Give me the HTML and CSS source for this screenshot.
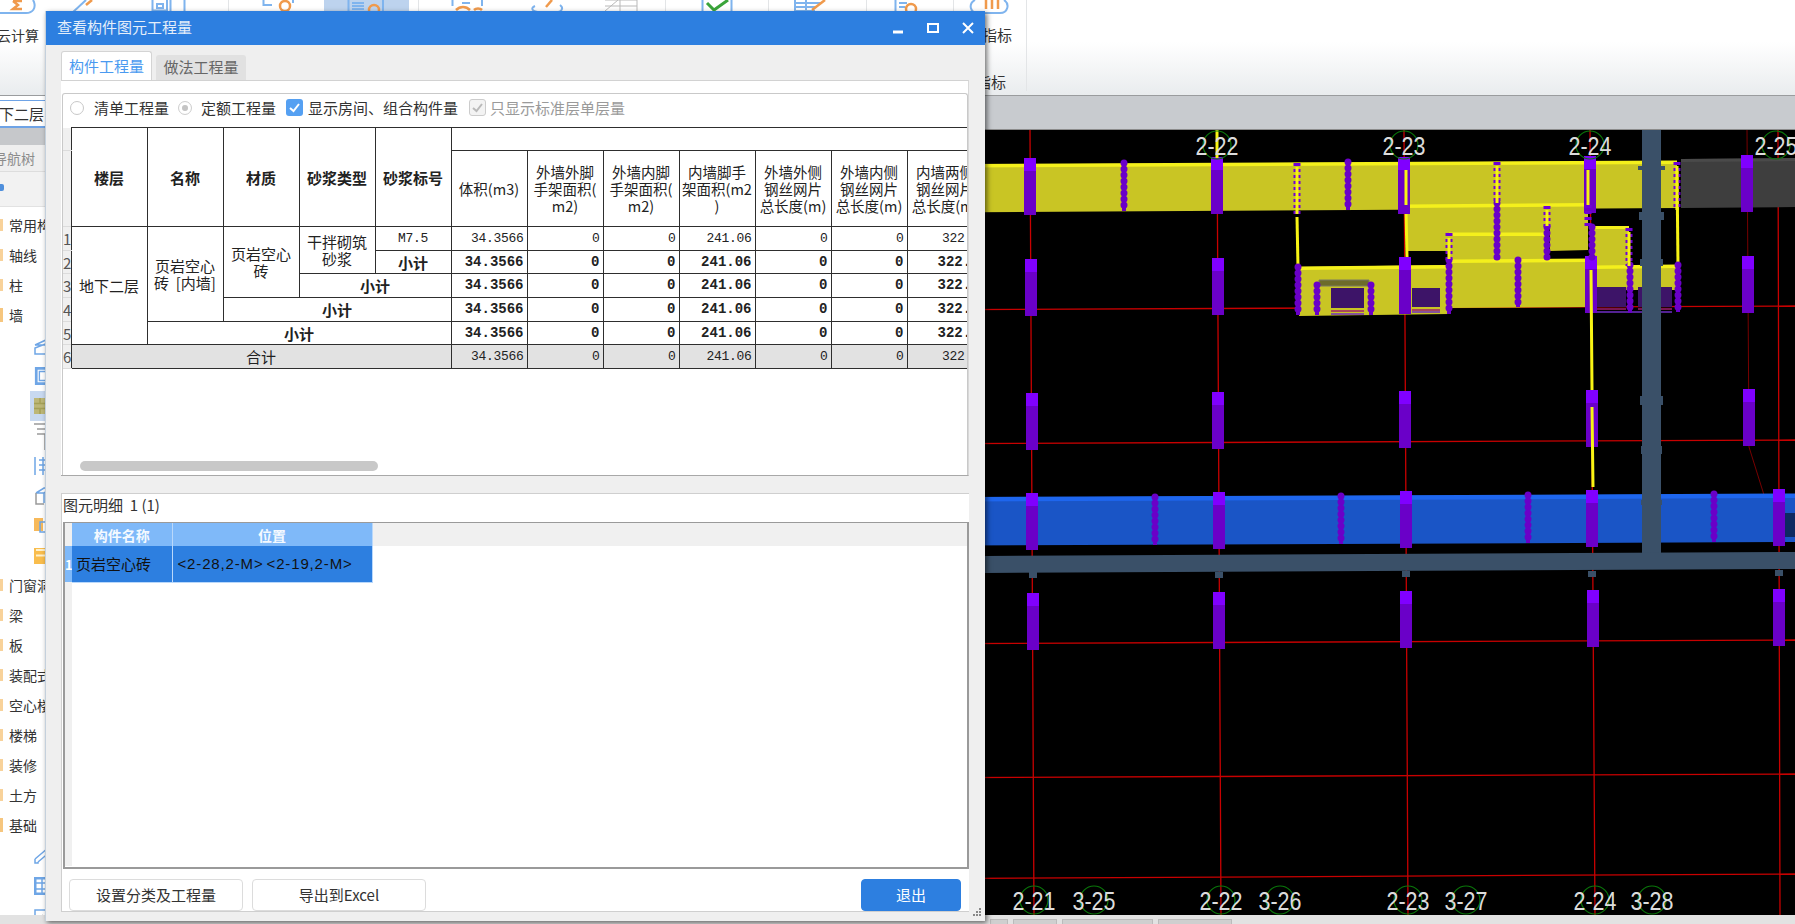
FILE: index.html
```html
<!DOCTYPE html>
<html lang="zh-CN">
<head>
<meta charset="utf-8">
<title>查看构件图元工程量</title>
<link rel="stylesheet" href="styles.css">
</head>
<body>
<div class="app">
  <header class="ribbon">
    <svg class="ribbon-art" width="1795" height="95" viewBox="0 0 1795 95">
      <rect class="hl" x="324" y="0" width="85" height="11"/>
      <g class="sep">
        <path d="M228.500 0V91M418.500 0V91M665.500 0V91M768.500 0V91M866.500 0V91M953.500 0V91M1026.500 0V91"/>
      </g>
      <g class="ib">
        <path d="M-4 13H26C33 13 36 8 34 2L33 0"/>
        <path d="M72 13L86 0"/>
        <path d="M152.500 0V10.500H167V0M157 4H163V8H157ZM170.500 0V11M184.500 0V11"/>
        <path d="M263.500 0V5H272M293 0V3"/>
        <path d="M348.500 0V12M352 3H364M352 6H364M352 9H364M383 0V12"/>
        <path d="M452.500 0V6M482 0V6M462 3H470"/>
        <path d="M535 6C530 8 532 12 540 12H556C562 12 564 8 560 5"/>
        <path d="M702.500 0V11M731.500 0V11"/>
        <path d="M795 3H822M795 7H815M795 11H815M795 0V11M806 0V11"/>
        <path d="M895.500 0V11M899 3H907M899 7H905"/>
        <path d="M975 0C968 4 970 13 978 13H1000C1008 13 1010 4 1004 0"/>
      </g>
      <g class="ig"><path d="M605 11L618 0M605 0H637M620 0V11M637 0V11M605 6H637"/></g>
      <g class="io">
        <path d="M13 1H22M13 1L18 5L13 9H22"/>
        <path d="M86 5L92 0"/>
        <circle cx="285" cy="6" r="5"/>
        <circle cx="374" cy="10" r="5"/>
        <path d="M456 10C460 6 466 6 470 10M474 10C476 8 480 8 482 10"/>
        <path d="M546 7L552 0"/>
        <path d="M812 10L825 0"/>
        <circle cx="911" cy="9" r="5"/>
        <path d="M986 0V9M992 0V9M998 0V9"/>
      </g>
      <path class="ic" d="M707 3L714 10L728 0"/>
    </svg>
    <div class="rb-labels">
      <span class="rb-cloud">云计算</span>
      <span class="rb-col"><span>指标</span><span class="rb-second">指标</span></span>
    </div>
  </header>

  <div class="main">
    <aside class="side">
      <div class="combo">地下二层</div>
      <div class="side-band"></div>
      <div class="side-tab">导航树</div>
      <div class="side-tool"><span class="plus"></span></div>
      <ul class="tree">
        <li class="node"><i class="fold"></i>常用构件类型</li>
        <li class="node"><i class="fold"></i>轴线</li>
        <li class="node"><i class="fold"></i>柱</li>
        <li class="node"><i class="fold open"></i>墙</li>
        <li class="leaf"><svg class="ti" viewBox="0 0 18 18"><path class="tb" d="M1 8L14 2V6L1 11V17H14M1 8H14"/></svg></li>
        <li class="leaf"><svg class="ti" viewBox="0 0 18 20"><path class="tbb" d="M1.500 1.500H17V18.500H1.500Z"/><path class="tb" d="M5 5H14V15H5Z"/></svg></li>
        <li class="leaf on"><svg class="ti" viewBox="0 0 18 18"><rect class="tbrick" x="0" y="1" width="18" height="16"/><path class="tbl" d="M0 6.500H18M0 11.500H18M6 1V6M13 6V12M6 12V17"/></svg></li>
        <li class="leaf"><svg class="ti tall" viewBox="0 0 18 28"><path class="tg" d="M0 2H12M3 7H12M3 12H11V28"/></svg></li>
        <li class="leaf"><svg class="ti" viewBox="0 0 18 18"><path class="tb" d="M1 0V18M5 3H12M5 8H12M5 13H12M9 0V18"/></svg></li>
        <li class="leaf"><svg class="ti" viewBox="0 0 18 18"><path class="tb" d="M2 6L10 1H18L10 6H2M10 6V16"/><path class="tg" d="M2 6V17H10"/></svg></li>
        <li class="leaf"><svg class="ti" viewBox="0 0 18 18"><rect class="to" x="0" y="1" width="9" height="13"/><path class="tb" d="M6 5H14V15H6Z"/></svg></li>
        <li class="leaf"><svg class="ti" viewBox="0 0 18 18"><rect class="ty" x="0" y="1" width="18" height="16"/><path class="tw" d="M2 8.500H18M2 3H16"/></svg></li>
        <li class="node"><i class="fold"></i>门窗洞</li>
        <li class="node"><i class="fold"></i>梁</li>
        <li class="node"><i class="fold"></i>板</li>
        <li class="node"><i class="fold"></i>装配式</li>
        <li class="node"><i class="fold"></i>空心楼盖</li>
        <li class="node"><i class="fold"></i>楼梯</li>
        <li class="node"><i class="fold"></i>装修</li>
        <li class="node"><i class="fold"></i>土方</li>
        <li class="node"><i class="fold open"></i>基础</li>
        <li class="leaf"><svg class="ti" viewBox="0 0 18 18"><path class="tb" d="M1 12L14 1M4 15L17 4M1 12V16H4V15"/></svg></li>
        <li class="leaf"><svg class="ti" viewBox="0 0 18 18"><path class="tbb" d="M1 1H17V17H1Z"/><path class="tb" d="M1 6H17M1 12H17M8 1V17"/></svg></li>
        <li class="leaf"><svg class="ti" viewBox="0 0 18 18"><path class="tb" d="M1 3H17V17H1Z"/><path class="tg" d="M5 13L9 8"/></svg></li>
      </ul>
    </aside>

    <section class="work">
      <div class="work-band"></div>
      <svg class="cad" viewBox="160 130 1635 785" width="1635" height="785">
        <defs>
          <symbol id="col" viewBox="0 0 12 57" width="12" height="57">
            <rect class="col-b" width="12" height="57"/>
            <rect class="col-t" width="12" height="13"/>
          </symbol>
          <symbol id="dot" viewBox="0 0 8 6" width="8" height="6">
            <rect class="slate" width="8" height="6"/>
          </symbol>
        </defs>

        <!-- grid lines -->
        <g class="red">
          <path d="M1030 130L1034 915M1217 130L1221 915M1404 130L1408 915M1590 130L1595 915M1778 130L1780 915"/>
          <path d="M860 310L1795 306"/>
          <path d="M860 444L1795 440"/>
          <path d="M860 644L1795 640"/>
          <path d="M860 778L1795 774"/>
          <path d="M860 879L1795 874"/>
        </g>
        <path class="red-d" d="M1747 130L1749 447L1764 495"/>

        <!-- upper walls -->
        <g class="wall">
          <path d="M860 165L1677 161V208L860 213Z"/>
          <path d="M1406 205L1588 203V250L1550 251V227H1545V260H1449V251H1406Z"/>
          <path d="M1593 227H1629V267H1593Z"/>
          <path d="M1299 267L1449 265V260L1590 259V307L1449 308V314L1299 316Z"/>
          <path d="M1593 267L1677 265V290H1593Z"/>
        </g>
        <g class="wall-hi">
          <path d="M860 164.500L1677 160.500V164L860 168Z"/>
          <path d="M1406 204.500L1588 203V206.500L1406 208Z"/>
          <path d="M1449 232.500H1545V236H1449Z"/>
          <path d="M1593 226H1629V229H1593Z"/>
          <path d="M1299 266.500L1449 265V268.500L1299 270Z"/>
          <path d="M1449 259.500L1590 258.500V262L1449 263Z"/>
          <path d="M1593 265.500L1677 264.500V268L1593 269Z"/>
        </g>
        <path class="wall-g" d="M1681 159L1795 158V207L1681 208Z"/>
        <path class="wall-g2" d="M1681 159L1795 158V161L1681 162Z"/>

        <!-- windows -->
        <g class="win">
          <rect x="1331" y="288" width="33" height="20"/>
          <rect x="1412" y="288" width="28" height="19"/>
          <rect x="1597" y="287" width="29" height="20"/>
          <rect x="1638" y="287" width="34" height="20"/>
        </g>
        <g class="win-l">
          <path d="M1331 311H1364M1412 310H1440M1597 309H1626M1638 309H1672"/>
        </g>
        <g class="win-p">
          <path d="M1331 314H1364M1412 312H1440M1597 312H1672"/>
        </g>
        <path class="lintel" d="M1319 280H1369V286H1319Z"/>

        <!-- blue wall -->
        <path class="bwall" d="M860 498L1795 494V542L860 546Z"/>
        <path class="bwall-hi" d="M860 497.500L1795 493.500V498L860 502Z"/>
        <path class="bwall-end" d="M1785 513H1795V537H1785Z"/>

        <!-- yellow edges -->
        <g class="yl">
          <path d="M1297 217L1298 267"/>
          <path d="M1406 210L1407 257"/>
          <path d="M1677 170L1678 265"/>
        </g>

        <!-- columns -->
        <use href="#col" x="1024" y="158"/><use href="#col" x="1211" y="157"/><use href="#col" x="1398" y="157"/><use href="#col" x="1584" y="156"/><use href="#col" x="1741" y="155"/>
        <use href="#col" x="1025" y="259"/><use href="#col" x="1212" y="258"/><use href="#col" x="1399" y="257"/><use href="#col" x="1585" y="256"/><use href="#col" x="1742" y="256"/>
        <use href="#col" x="1026" y="393"/><use href="#col" x="1212" y="392"/><use href="#col" x="1399" y="391"/><use href="#col" x="1586" y="390"/><use href="#col" x="1743" y="389"/>
        <use href="#col" x="1026" y="493"/><use href="#col" x="1213" y="492"/><use href="#col" x="1400" y="491"/><use href="#col" x="1586" y="490"/><use href="#col" x="1773" y="489"/>
        <use href="#col" x="1027" y="593"/><use href="#col" x="1213" y="592"/><use href="#col" x="1400" y="591"/><use href="#col" x="1587" y="590"/><use href="#col" x="1773" y="589"/>

        <!-- beaded posts -->
        <g class="post">
          <path d="M1124 163V211M1348 162V210M1497 203V260M1547 227V260M1518 260V307M1449 260V314M1298 267V315M1317 285V315M1371 285V315M1592 227V260M1630 265V313M1678 265V312"/>
          <path d="M1155 497V545M1341 496V544M1528 495V543M1714 494V542"/>
        </g>
        <g class="post-d">
          <path d="M1124 163V211M1348 162V210M1497 203V260M1547 227V260M1518 260V307M1449 260V314M1298 267V315M1317 285V315M1371 285V315M1592 227V260M1630 265V313M1678 265V312"/>
          <path d="M1155 497V545M1341 496V544M1528 495V543M1714 494V542"/>
        </g>

        <!-- dashed yellow posts -->
        <g class="vdash">
          <path d="M1297 163V216M1497 162V203M1547 206V227M1449 233V260M1588 205V226M1629 228V266M1677 162V210"/>
        </g>
        <g class="yl">
          <path d="M1297 167V214M1497 166V203M1547 210V226M1449 238V259M1406 170V205M1588 170V205M1629 232V266M1677 166V210"/>
          <path d="M1217 130V158"/>
          <path d="M1591 270L1592 390M1592 407L1593 487"/>
        </g>

        <!-- beams -->
        <g class="slate">
          <path d="M1642 130H1661V555H1642Z"/>
          <path d="M985 556L1795 552V569L985 573Z"/>
          <path d="M860 558L985 556V573L860 574Z"/>
          <path d="M1638 166H1665V170H1638ZM1639 212H1664V220H1639ZM1640 259H1663V266H1640ZM1640 396H1663V405H1640ZM1641 446H1662V454H1641ZM1641 500H1662V505H1641Z"/>
        </g>
        <use href="#dot" x="1029" y="572"/><use href="#dot" x="1215" y="572"/><use href="#dot" x="1402" y="571"/><use href="#dot" x="1588" y="571"/><use href="#dot" x="1775" y="570"/>

        <!-- axis markers -->
        <g class="ring">
          <circle cx="1217" cy="145" r="14"/><circle cx="1404" cy="145" r="14"/><circle cx="1590" cy="145" r="14"/><circle cx="1776" cy="145" r="14"/>
          <circle cx="1034" cy="900" r="14"/><circle cx="1094" cy="900" r="14"/><circle cx="1221" cy="900" r="14"/><circle cx="1280" cy="900" r="14"/><circle cx="1408" cy="900" r="14"/><circle cx="1466" cy="900" r="14"/><circle cx="1595" cy="900" r="14"/><circle cx="1652" cy="900" r="14"/>
        </g>
        <g class="axis">
          <text x="1217" y="155" textLength="43" lengthAdjust="spacingAndGlyphs">2-22</text><text x="1404" y="155" textLength="43" lengthAdjust="spacingAndGlyphs">2-23</text><text x="1590" y="155" textLength="43" lengthAdjust="spacingAndGlyphs">2-24</text><text x="1776" y="155" textLength="43" lengthAdjust="spacingAndGlyphs">2-25</text>
          <text x="1034" y="910" textLength="43" lengthAdjust="spacingAndGlyphs">2-21</text><text x="1094" y="910" textLength="43" lengthAdjust="spacingAndGlyphs">3-25</text><text x="1221" y="910" textLength="43" lengthAdjust="spacingAndGlyphs">2-22</text><text x="1280" y="910" textLength="43" lengthAdjust="spacingAndGlyphs">3-26</text><text x="1408" y="910" textLength="43" lengthAdjust="spacingAndGlyphs">2-23</text><text x="1466" y="910" textLength="43" lengthAdjust="spacingAndGlyphs">3-27</text><text x="1595" y="910" textLength="43" lengthAdjust="spacingAndGlyphs">2-24</text><text x="1652" y="910" textLength="43" lengthAdjust="spacingAndGlyphs">3-28</text>
        </g>
      </svg>
    </section>
  </div>

  <footer class="status">
    <span class="st st-a"></span><span class="st st-b"></span><span class="st st-c"></span><span class="st st-d"></span>
  </footer>
</div>

<div class="dialog">
  <div class="titlebar">
    <span class="title">查看构件图元工程量</span>
    <span class="winbtn"><svg width="14" height="14" viewBox="0 0 14 14"><path class="wb" d="M2 11H12"/></svg></span>
    <span class="winbtn"><svg width="14" height="14" viewBox="0 0 14 14"><path class="wb2" d="M2 3H12V11H2Z"/></svg></span>
    <span class="winbtn"><svg width="14" height="14" viewBox="0 0 14 14"><path class="wb2" d="M2 2L12 12M12 2L2 12"/></svg></span>
  </div>
  <div class="tabs">
    <span class="tab active">构件工程量</span>
    <span class="tab">做法工程量</span>
  </div>
  <div class="panel">
    <div class="inner">
      <div class="options">
        <span class="radio"></span><span class="opt-a">清单工程量</span>
        <span class="radio sel"></span><span class="opt-b">定额工程量</span>
        <span class="check on"><svg width="17" height="17" viewBox="0 0 17 17"><path class="tick" d="M4 9L7.500 12L13 5"/></svg></span><span class="opt-c">显示房间、组合构件量</span>
        <span class="check off"><svg width="17" height="17" viewBox="0 0 17 17"><path class="tick-g" d="M4 9L7.500 12L13 5"/></svg></span><span class="opt-d">只显示标准层单层量</span>
      </div>
      <div class="sheet">
        <table class="qty">
          <colgroup>
            <col class="c-rh"><col class="c"><col class="c"><col class="c"><col class="c"><col class="c"><col class="c"><col class="c"><col class="c"><col class="c"><col class="c"><col class="c"><col class="c">
          </colgroup>
          <thead>
            <tr class="h1">
              <td class="rh"></td>
              <th rowspan="2">楼层</th><th rowspan="2">名称</th><th rowspan="2">材质</th><th rowspan="2">砂浆类型</th><th rowspan="2">砂浆标号</th>
              <td colspan="7"></td>
            </tr>
            <tr class="h2">
              <td class="rh"></td>
              <td class="hc">体积(m3)</td>
              <td class="hc">外墙外脚<br>手架面积(<br>m2)</td>
              <td class="hc">外墙内脚<br>手架面积(<br>m2)</td>
              <td class="hc">内墙脚手<br>架面积(m2<br>)</td>
              <td class="hc">外墙外侧<br>钢丝网片<br>总长度(m)</td>
              <td class="hc">外墙内侧<br>钢丝网片<br>总长度(m)</td>
              <td class="hc">内墙两侧<br>钢丝网片<br>总长度(m)</td>
            </tr>
          </thead>
          <tbody>
            <tr>
              <td class="rh">1</td>
              <td class="tx" rowspan="5">地下二层</td>
              <td class="tx" rowspan="4">页岩空心<br>砖&nbsp;&nbsp;[内墙]</td>
              <td class="tx" rowspan="3">页岩空心<br>砖</td>
              <td class="tx" rowspan="2">干拌砌筑<br>砂浆</td>
              <td class="code">M7.5</td>
              <td class="n">34.3566</td><td class="n">0</td><td class="n">0</td><td class="n">241.06</td><td class="n">0</td><td class="n">0</td><td class="n">322.1</td>
            </tr>
            <tr class="sum">
              <td class="rh">2</td>
              <td class="lbl">小计</td>
              <td class="n">34.3566</td><td class="n">0</td><td class="n">0</td><td class="n">241.06</td><td class="n">0</td><td class="n">0</td><td class="n">322.1</td>
            </tr>
            <tr class="sum">
              <td class="rh">3</td>
              <td class="lbl" colspan="2">小计</td>
              <td class="n">34.3566</td><td class="n">0</td><td class="n">0</td><td class="n">241.06</td><td class="n">0</td><td class="n">0</td><td class="n">322.1</td>
            </tr>
            <tr class="sum">
              <td class="rh">4</td>
              <td class="lbl" colspan="3">小计</td>
              <td class="n">34.3566</td><td class="n">0</td><td class="n">0</td><td class="n">241.06</td><td class="n">0</td><td class="n">0</td><td class="n">322.1</td>
            </tr>
            <tr class="sum">
              <td class="rh">5</td>
              <td class="lbl" colspan="4">小计</td>
              <td class="n">34.3566</td><td class="n">0</td><td class="n">0</td><td class="n">241.06</td><td class="n">0</td><td class="n">0</td><td class="n">322.1</td>
            </tr>
            <tr class="total">
              <td class="rh">6</td>
              <td class="tx" colspan="5">合计</td>
              <td class="n">34.3566</td><td class="n">0</td><td class="n">0</td><td class="n">241.06</td><td class="n">0</td><td class="n">0</td><td class="n">322.1</td>
            </tr>
          </tbody>
        </table>
        <div class="hbar"></div>
      </div>
    </div>
  </div>
  <div class="splitter"></div>
  <div class="lower">
    <div class="lower-label">图元明细&nbsp;&nbsp;1 (1)</div>
    <div class="detail">
      <table class="dt">
        <colgroup><col class="d-rh"><col class="d-a"><col class="d-b"><col></colgroup>
        <tr class="dh"><td class="d-side"></td><th>构件名称</th><th>位置</th><td class="d-fill"></td></tr>
        <tr class="dr"><td class="d-num">1</td><td class="d-name">页岩空心砖</td><td class="d-pos">&lt;2-28,2-M&gt; &lt;2-19,2-M&gt;</td><td></td></tr>
        <tr class="df"><td class="d-blank"></td><td></td><td></td><td></td></tr>
      </table>
    </div>
    <div class="actions">
      <button class="btn">设置分类及工程量</button>
      <button class="btn">导出到Excel</button>
      <button class="btn primary">退出</button>
    </div>
  </div>
  <svg class="grip" width="10" height="10" viewBox="0 0 10 10"><path class="grip-d" d="M8 1H10V3H8ZM5 4H7V6H5ZM8 4H10V6H8ZM2 7H4V9H2ZM5 7H7V9H5ZM8 7H10V9H8Z"/></svg>
</div>
</body>
</html>
```

FILE: styles.css
```css
* { box-sizing: border-box; }
html, body { margin: 0; padding: 0; }
body {
  width: 1795px;
  height: 924px;
  overflow: hidden;
  position: relative;
  font-family: "Noto Sans CJK SC", "Liberation Sans", sans-serif;
  font-size: 14px;
  color: #333;
  background: #e0e0e0;
}
.app { display: flex; flex-direction: column; width: 1795px; height: 924px; }

/* ribbon */
.ribbon {
  position: relative;
  flex: 0 0 96px;
  background: linear-gradient(#fff 0, #fff 42px, #e9ecee 95px);
  border-bottom: 1px solid #9a9c9e;
  overflow: hidden;
}
.ribbon-art { position: absolute; left: 0; top: 0; }
.hl { fill: #bdd3ee; }
.sep path { stroke: #e3e5e7; stroke-width: 1; fill: none; }
.ib path { stroke: #7fb4ee; stroke-width: 2; fill: none; }
.ig path { stroke: #b9b9b9; stroke-width: 1; fill: none; }
.io path, .io circle { stroke: #f09a4c; stroke-width: 2.500; fill: none; }
.ic { stroke: #3aa43a; stroke-width: 3; fill: none; }
.rb-labels { display: flex; position: relative; padding-top: 25px; font-size: 14px; color: #333; }
.rb-cloud { margin-left: -3px; line-height: 20px; }
.rb-col { display: flex; flex-direction: column; margin-left: 943px; margin-top: -1px; font-size: 15px; line-height: 22px; width: 30px; white-space: nowrap; }
.rb-second { margin-top: 25px; margin-left: -6px; }

/* main */
.main { flex: 1; display: flex; min-height: 0; }
.side { flex: 0 0 160px; background: #fff; overflow: hidden; padding-top: 4px; }
.combo {
  height: 28px;
  line-height: 26px;
  border-top: 1px solid #6ea3e6;
  border-bottom: 2px solid #6ea3e6;
  background: #fff;
  padding-left: 0;
  text-indent: -16px;
  font-size: 15px;
  white-space: nowrap;
}
.side-band { height: 17px; background: #c6c8cb; }
.side-tab { height: 27px; line-height: 27px; background: #efefef; color: #8c8c8c; text-indent: -7px; font-size: 14px; border-bottom: 1px solid #ddd; }
.side-tool { height: 35px; background: #f2f2f2; border-bottom: 1px solid #e2e2e2; display: flex; align-items: center; padding-bottom: 3px; }
.plus { width: 4px; height: 7px; background: #4f8fdc; border-radius: 0 2px 2px 0; }
.tree { list-style: none; margin: 4px 0 0; padding: 0; }
.node { height: 30px; display: flex; align-items: center; font-size: 14px; color: #333; white-space: nowrap; padding-bottom: 2px; }
.fold { width: 3px; height: 12px; margin-right: 6px; background: #f8d29a; }
.fold.open { width: 3px; background: #f6c67e; height: 14px; }
.leaf { height: 30px; display: flex; align-items: center; padding-left: 34px; }
.leaf.on { background: linear-gradient(90deg, transparent 30px, #c8d9f0 30px); height: 30px; }
.ti { width: 18px; height: 18px; display: block; }
.ti.tall { height: 28px; }
.tb { stroke: #6fa6e6; stroke-width: 1.500; fill: none; }
.tbb { stroke: #6fa6e6; stroke-width: 3; fill: none; }
.tg { stroke: #9a9a9a; stroke-width: 1.500; fill: none; }
.tbrick { fill: #bdb777; }
.tbl { stroke: #a5a055; stroke-width: 1.500; fill: none; }
.to { fill: #f7b95a; }
.ty { fill: #f9bd4d; }
.tw { stroke: #fff1cc; stroke-width: 2; fill: none; }

/* workspace */
.work { flex: 1; display: flex; flex-direction: column; min-width: 0; }
.work-band { flex: 0 0 34px; background: #c8cbcf; border-bottom: 1px solid #8c8c8c; }
.cad { display: block; flex: 0 0 785px; background: #000; }
.col-b { fill: #6a00c8; }
.col-t { fill: #8000ff; }
.red path { stroke: #c80000; stroke-width: 1.300; fill: none; }
.red-d { stroke: #700; stroke-width: 1; fill: none; }
.wall path { fill: #c9c524; }
.wall-hi path { fill: #f4f01c; }
.wall-g { fill: #3e3e3e; }
.wall-g2 { fill: #4a4a4a; }
.win rect { fill: #3d1468; }
.win-l path { stroke: #a01e6e; stroke-width: 1.500; fill: none; }
.win-p path { stroke: #6f2ec4; stroke-width: 1.500; fill: none; }
.lintel { fill: #6d6b2a; stroke: #7a7a60; stroke-width: 1; }
.bwall { fill: #1a55c6; }
.bwall-hi { fill: #1e66ee; }
.bwall-end { fill: #0e2a62; }
.yl path { stroke: #f8f414; stroke-width: 3; fill: none; }
.post path { stroke: #6a00c8; stroke-width: 4; fill: none; }
.post-d path { stroke: #6a00c8; stroke-width: 7; stroke-linecap: round; stroke-dasharray: 0 6; fill: none; }
.vdash path { stroke: #7000d8; stroke-width: 7; stroke-dasharray: 3 3; fill: none; }
.slate, .slate path { fill: #3a5068; }
.ring circle { stroke: #0a780a; stroke-width: 1.200; fill: none; }
.axis text {
  font-family: "Liberation Sans", sans-serif;
  font-size: 25px;
  fill: #dcdcdc;
  text-anchor: middle;
}

/* status */
.status { flex: 0 0 9px; background: #e2e2e2; display: flex; align-items: flex-end; padding-left: 990px; gap: 5px; }
.st { height: 5px; background: #cfcfcf; border: 1px solid #bbb; border-bottom: 0; }
.st-a { width: 18px; }
.st-b { width: 44px; }
.st-c { width: 91px; }
.st-d { width: 74px; }

/* dialog */
.dialog {
  position: absolute;
  left: 45px;
  top: 11px;
  width: 940px;
  height: 910px;
  background: #efefef;
  border-left: 1px solid #c4d0dc;
  box-shadow: 2px 2px 5px rgba(0, 0, 0, .55);
  display: flex;
  flex-direction: column;
}
.titlebar { flex: 0 0 34px; background: #2d7fe0; display: flex; align-items: center; padding-left: 11px; color: #e4eefa; }
.title { flex: 1; font-size: 15px; padding-bottom: 3px; }
.winbtn { width: 35px; display: flex; align-items: center; justify-content: center; }
.wb { stroke: #fff; stroke-width: 3; fill: none; }
.wb2 { stroke: #fff; stroke-width: 2; fill: none; }
.tabs { display: flex; align-items: flex-end; gap: 4px; margin: 6px 0 0 15px; height: 29px; }
.tab { width: 90px; height: 25px; line-height: 23px; text-align: center; background: #e1e1e1; color: #666; font-size: 15px; border-radius: 3px 3px 0 0; }
.tab.active { height: 29px; width: 91px; line-height: 27px; background: #fff; color: #4a9af0; border: 1px solid #d4d4d4; border-bottom: 0; }
.panel { height: 396px; margin: 0 16px 0 15px; background: #fff; border-top: 1px solid #d2d2d2; border-right: 1px solid #d8d8d8; border-bottom: 1px solid #a8a8a8; padding: 12px 0 0 1px; display: flex; }
.inner { flex: 1; min-width: 0; border: 1px solid #c9c9c9; border-bottom: 0; border-radius: 3px 3px 0 0; display: flex; flex-direction: column; }
.options { flex: 0 0 33px; display: flex; align-items: center; padding: 0 0 6px 7px; font-size: 15px; color: #333; white-space: nowrap; }
.radio { width: 14px; height: 14px; border-radius: 50%; border: 1px solid #c8c8c8; background: #fff; position: relative; }
.radio.sel { margin-left: 9px; background: #f2f2f2; box-shadow: inset 0 0 0 3px #fff; border-color: #cfcfcf; }
.radio.sel::after { content: ""; position: absolute; left: 3px; top: 3px; width: 6px; height: 6px; border-radius: 50%; background: #c4c4c4; }
.opt-a { margin-left: 10px; }
.opt-b { margin-left: 9px; }
.check { width: 17px; height: 17px; border-radius: 3px; display: block; }
.check svg { display: block; }
.check.on { margin-left: 10px; background: #55a0f2; }
.check.off { margin-left: 11px; background: #f3f3f3; border: 1px solid #cccccc; }
.check.off svg { margin: -1px; }
.tick { stroke: #fff; stroke-width: 2; fill: none; }
.tick-g { stroke: #b9b9b9; stroke-width: 2; fill: none; }
.opt-c { margin-left: 5px; }
.opt-d { margin-left: 4px; color: #9a9a9a; }

.sheet { flex: 1; position: relative; overflow: hidden; min-height: 0; }
.qty { border-collapse: collapse; table-layout: fixed; width: 920px; font-size: 15px; color: #222; }
.c-rh { width: 8px; }
.c { width: 76px; }
.qty td, .qty th { border: 1px solid #2e2e2e; padding: 0; overflow: hidden; text-align: center; line-height: 17px; }
.qty th { font-weight: 700; font-size: 15px; white-space: nowrap; }
.qty tr:first-child td, .qty tr:first-child th { border-top-width: 1px; }
.h1 { height: 23px; }
.h2 { height: 76px; }
.hc { font-size: 14.500px; white-space: nowrap; }
tbody tr { height: 23.700px; }
.qty td.rh { background: #f0f0f0; border: 0; border-right: 1px solid #2e2e2e; border-bottom: 1px solid #dcdcdc; color: #555; font-size: 15px; text-align: left; }
.qty td.tx { font-size: 15px; white-space: nowrap; }
.qty td.n { font-family: "Liberation Mono", monospace; font-size: 13px; letter-spacing: -.3px; text-align: right; padding-right: 3px; white-space: nowrap; }
.qty td.code { font-family: "Liberation Mono", monospace; font-size: 13px; letter-spacing: -.3px; }
.sum td.n { font-weight: 700; font-size: 14px; letter-spacing: 0; }
.sum td.lbl { font-weight: 700; font-size: 15px; }
.total td { background: #e2e2e2; }
.qty .total td.rh { background: #f0f0f0; }
.hbar { position: absolute; left: 17px; bottom: 4px; width: 298px; height: 10px; border-radius: 5px; background: #c8c8c8; }

.splitter { flex: 0 0 17px; }
.lower { height: 419px; margin: 0 16px 0 15px; background: #fff; border: 1px solid #cfcfcf; border-right: 0; display: flex; flex-direction: column; }
.lower-label { flex: 0 0 28px; line-height: 22px; padding-left: 1px; font-size: 15px; color: #333; }
.detail { flex: 0 0 347px; margin-left: 1px; border: 1px solid #9a9a9a; border-width: 1.500px 2px 2px 2px; overflow: hidden; background: #fff; }
.dt { border-collapse: collapse; table-layout: fixed; width: 100%; font-size: 15px; }
.dt td, .dt th { padding: 0; }
.d-rh { width: 7px; }
.d-a { width: 100px; }
.d-b { width: 200px; }
.dh { height: 23px; }
.dh th { background: #7fb9f9; color: #f4f9ff; font-size: 14px; font-weight: 700; border-right: 1px solid #b9d8fb; }
.d-side, .d-fill { background: #f0f0f0; }
.dr { height: 36px; }
.d-num { background: #7fb9f9; color: #fff; font-weight: 700; font-size: 13px; overflow: hidden; }
.d-name, .d-pos { background: #2d7fe0; color: #111; border-right: 1px solid #b9d8fb; border-bottom: 1px solid #b9d8fb; white-space: nowrap; }
.d-name { padding-left: 4px !important; }
.d-pos { font-family: "Liberation Sans", sans-serif; letter-spacing: .85px; padding-left: 5px !important; font-size: 15px; word-spacing: -2px; }
.df { height: 284px; }
.d-blank { background: #f0f0f0; }
.actions { flex: 1; display: flex; align-items: flex-start; padding: 10px 0 0 7px; gap: 9px; }
.btn { width: 174px; height: 32px; font: inherit; font-size: 15px; color: #333; background: #fff; border: 1px solid #dcdcdc; border-radius: 4px; padding: 0 0 2px; }
.btn.primary { width: 100px; margin-left: 426px; background: #2d7fe0; border-color: #2d7fe0; color: #fff; }
.grip { position: absolute; right: 4px; bottom: 4px; }
.grip-d { fill: #888; }
```
